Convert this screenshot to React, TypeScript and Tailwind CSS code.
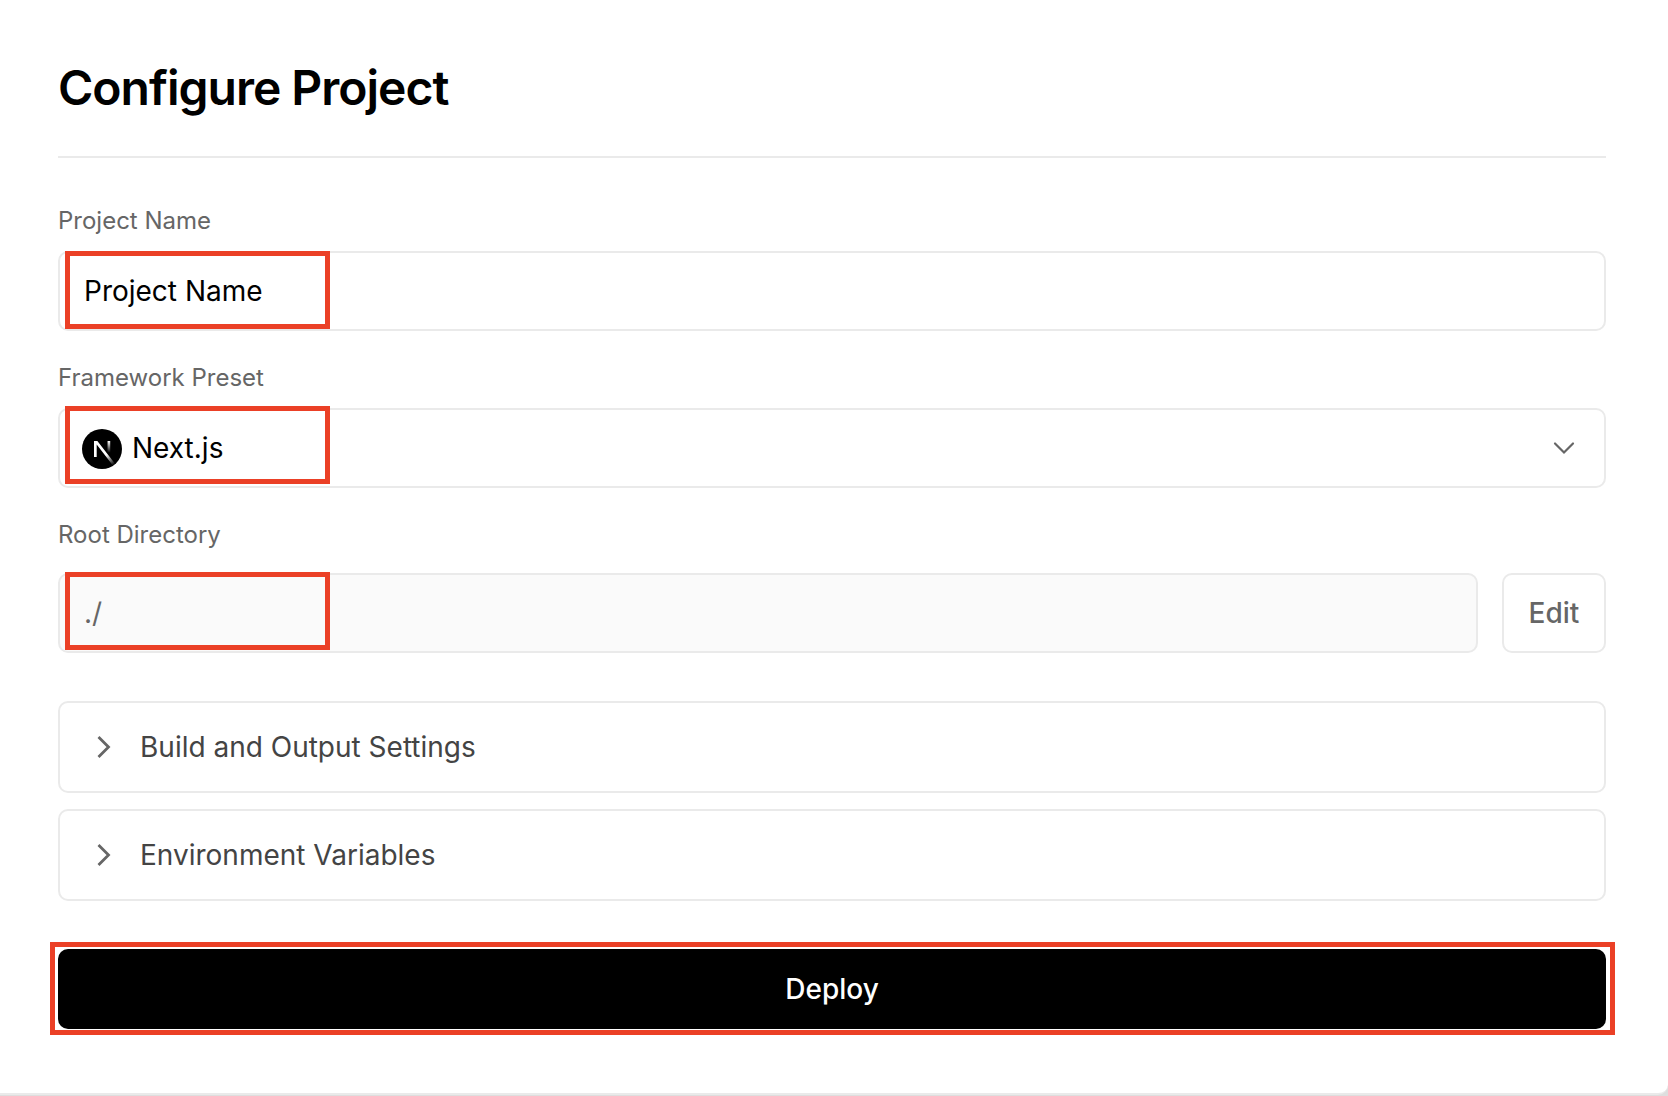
import { useState, type ReactNode } from "react";

function Highlight({ className }: { className: string }) {
  return (
    <span
      aria-hidden="true"
      className={`pointer-events-none absolute border-5 border-[#eb4026] ${className}`}
    />
  );
}

function NextLogo() {
  return (
    <svg
      aria-hidden="true"
      viewBox="0 0 180 180"
      className="pointer-events-none absolute top-[21px] left-6 size-10"
    >
      <defs>
        <linearGradient id="diagonal" x1="109" y1="116.5" x2="144.5" y2="160.5" gradientUnits="userSpaceOnUse">
          <stop stopColor="white" />
          <stop offset="1" stopColor="white" stopOpacity="0" />
        </linearGradient>
        <linearGradient id="stem" x1="121" y1="54" x2="120.8" y2="106.875" gradientUnits="userSpaceOnUse">
          <stop stopColor="white" />
          <stop offset="1" stopColor="white" stopOpacity="0" />
        </linearGradient>
      </defs>
      <circle cx="90" cy="90" r="90" fill="black" />
      <path
        d="M149.508 157.52L69.142 54H54V125.97H66.1136V69.3836L139.999 164.845C143.333 162.614 146.509 160.165 149.508 157.52Z"
        fill="url(#diagonal)"
      />
      <rect x="115" y="54" width="12" height="72" fill="url(#stem)" />
    </svg>
  );
}

function Label({ htmlFor, children }: { htmlFor: string; children: ReactNode }) {
  return (
    <label htmlFor={htmlFor} className="block text-2xl leading-[29px] text-[#666]">
      {children}
    </label>
  );
}

function Disclosure({ title }: { title: string }) {
  const [open, setOpen] = useState(false);
  return (
    <button
      type="button"
      aria-expanded={open}
      onClick={() => setOpen(!open)}
      className="flex h-23 w-full items-center gap-7 rounded-[10px] border-2 border-[#eaeaea] bg-white pl-9 text-left text-[28px] leading-10 text-[#444] [font-variant-ligatures:none]"
    >
      <svg
        aria-hidden="true"
        viewBox="0 0 16 24"
        fill="none"
        stroke="#666"
        strokeWidth="2.8"
        className={open ? "h-6 w-4 rotate-90" : "h-6 w-4"}
      >
        <path d="M2.5 2L12.5 12L2.5 22" />
      </svg>
      {title}
    </button>
  );
}

export default function App() {
  const [name, setName] = useState("Project Name");
  return (
    <div className="min-h-screen bg-[#dedede] font-['Inter',sans-serif] [font-optical-sizing:none]">
      <main className="rounded-br-[10px] border-b-2 border-[#eaeaea] bg-white pt-14 pr-[62px] pb-16 pl-[58px]">
        <h1 className="border-b-2 border-[#eaeaea] pb-9 text-5xl leading-16 font-semibold tracking-[-1px] text-black">
          Configure Project
        </h1>

        <form onSubmit={(e) => e.preventDefault()} className="pt-12">
          <Label htmlFor="project-name">Project Name</Label>
          <div className="relative mt-4">
            <input
              id="project-name"
              type="text"
              value={name}
              onChange={(e) => setName(e.target.value)}
              className="block h-20 w-full rounded-[10px] border-2 border-[#eaeaea] bg-white px-6 text-[28px] text-black outline-none"
            />
            <Highlight className="top-0 left-[7px] h-[78px] w-[265px]" />
          </div>

          <div className="mt-8">
            <Label htmlFor="framework">Framework Preset</Label>
            <div className="relative mt-4">
              <select
                id="framework"
                className="block h-20 w-full appearance-none rounded-[10px] border-2 border-[#eaeaea] bg-white pr-20 pl-[72px] text-[28px] text-black outline-none"
              >
                <option>Next.js</option>
              </select>
              <NextLogo />
              <svg
                aria-hidden="true"
                viewBox="0 0 24 16"
                fill="none"
                stroke="#666"
                strokeWidth="2.2"
                strokeLinecap="round"
                className="pointer-events-none absolute top-8 right-[30px] h-4 w-6"
              >
                <path d="M3 3.5L12 12.5L21 3.5" />
              </svg>
              <Highlight className="-top-0.5 left-[7px] h-[78px] w-[265px]" />
            </div>
          </div>

          <div className="mt-8">
            <Label htmlFor="root-directory">Root Directory</Label>
            <div className="mt-6 flex gap-6">
              <div className="relative flex-1">
                <input
                  id="root-directory"
                  type="text"
                  disabled
                  value="./"
                  className="block h-20 w-full rounded-[10px] border-2 border-[#eaeaea] bg-[#fafafa] px-6 text-[28px] text-[#666]"
                />
                <Highlight className="-top-px left-[7px] h-[78px] w-[265px]" />
              </div>
              <button
                type="button"
                className="h-20 w-26 rounded-[10px] border-2 border-[#eaeaea] bg-white text-[28px] font-medium text-[#666]"
              >
                Edit
              </button>
            </div>
          </div>

          <div className="mt-12 flex flex-col gap-4">
            <Disclosure title="Build and Output Settings" />
            <Disclosure title="Environment Variables" />
          </div>

          <div className="relative mt-12">
            <button
              type="submit"
              className="block h-20 w-full rounded-[10px] bg-black text-[28px] font-medium text-white"
            >
              Deploy
            </button>
            <Highlight className="-top-[7px] -right-[9px] -bottom-1.5 -left-2" />
          </div>
        </form>
      </main>
    </div>
  );
}
